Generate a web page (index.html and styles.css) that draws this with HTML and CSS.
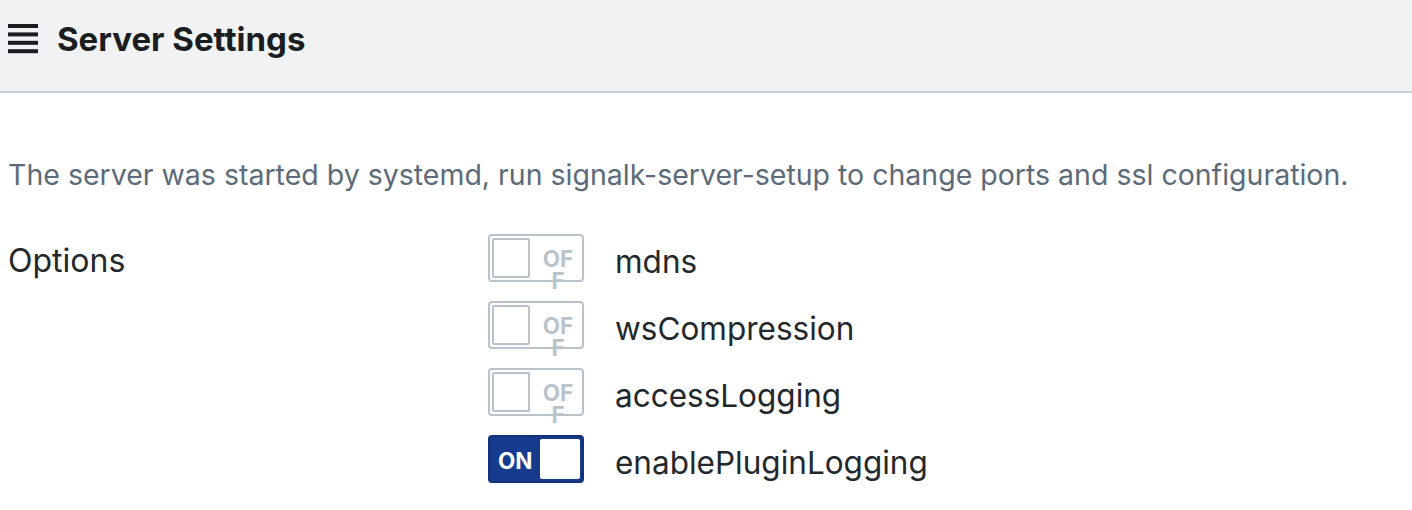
FILE: index.html
```html
<!DOCTYPE html>
<html>
<head>
<meta charset="utf-8">
<link rel="stylesheet" href="styles.css">
</head>
<body>
<div class="card">
  <div class="card-header">
    <svg class="menu-icon" width="30" height="30" viewBox="0 0 30 30"><rect x="0" y="0" width="30" height="4"/><rect x="0" y="8.4" width="30" height="4"/><rect x="0" y="16.8" width="30" height="4"/><rect x="0" y="25.2" width="30" height="4"/></svg>
    <span class="title">Server Settings</span>
  </div>
  <div class="card-body">
    <p class="note">The server was started by systemd, run signalk-server-setup to change ports and ssl configuration.</p>
    <div class="form-row">
      <div class="label">Options</div>
      <div class="options">
        <div class="opt"><span class="switch"><span class="knob"></span><span class="sw-text">OFF</span></span><span class="opt-name">mdns</span></div>
        <div class="opt"><span class="switch"><span class="knob"></span><span class="sw-text">OFF</span></span><span class="opt-name">wsCompression</span></div>
        <div class="opt"><span class="switch"><span class="knob"></span><span class="sw-text">OFF</span></span><span class="opt-name">accessLogging</span></div>
        <div class="opt"><span class="switch on"><span class="sw-text">ON</span><span class="knob"></span></span><span class="opt-name">enablePluginLogging</span></div>
      </div>
    </div>
  </div>
</div>
</body>
</html>
```
FILE: styles.css
```css
html, body { margin: 0; padding: 0; background: #fff; }
body { font-family: "Inter", "Liberation Sans", sans-serif; color: #23282c; }
.card-header {
  height: 93px;
  box-sizing: border-box;
  background: #f1f2f4;
  border-bottom: 2px solid #c8ced3;
  display: flex;
  align-items: center;
  padding: 0 8px 14px;
}
.menu-icon { fill: #1b1e21; margin-right: 19px; }
.title { font-size: 33px; font-weight: 700; color: #1b1e21; }
.card-body { padding: 0 8px; }
.note { margin: 61px 0 0; font-size: 28.5px; line-height: 42px; color: #5c6b79; }
.form-row { display: grid; grid-template-columns: 480px 1fr; margin-top: 38px; }
.label { font-size: 32px; line-height: 42px; padding-top: 6px; }
.options { display: flex; flex-direction: column; gap: 19px; }
.opt { display: flex; align-items: center; }
.switch {
  width: 96px; height: 48px; box-sizing: border-box;
  border: 2px solid #b8c3cb; border-radius: 4px;
  display: flex; align-items: flex-start; padding: 2px;
  position: relative;
}
.knob { width: 38px; height: 40px; box-sizing: border-box; border: 2px solid #b8c3cb; border-radius: 2px; background: #fff; flex: none; }
.sw-text { width: 36px; margin-left: 10px; font-size: 22.5px; font-weight: 700; color: #b8c3cb; line-height: 22px; word-break: break-all; text-align: center; padding-top: 10px; }
.switch.on { background: #163b8c; border-color: #12337a; }
.switch.on .sw-text { color: #fff; width: auto; word-break: normal; white-space: nowrap; margin: 0 0 0 6px; padding-top: 11px; font-size: 22.5px; }
.switch.on .knob { border: none; width: 40px; margin-left: auto; }
.opt-name { font-size: 31.5px; margin-left: 31px; padding-top: 6px; }
```
